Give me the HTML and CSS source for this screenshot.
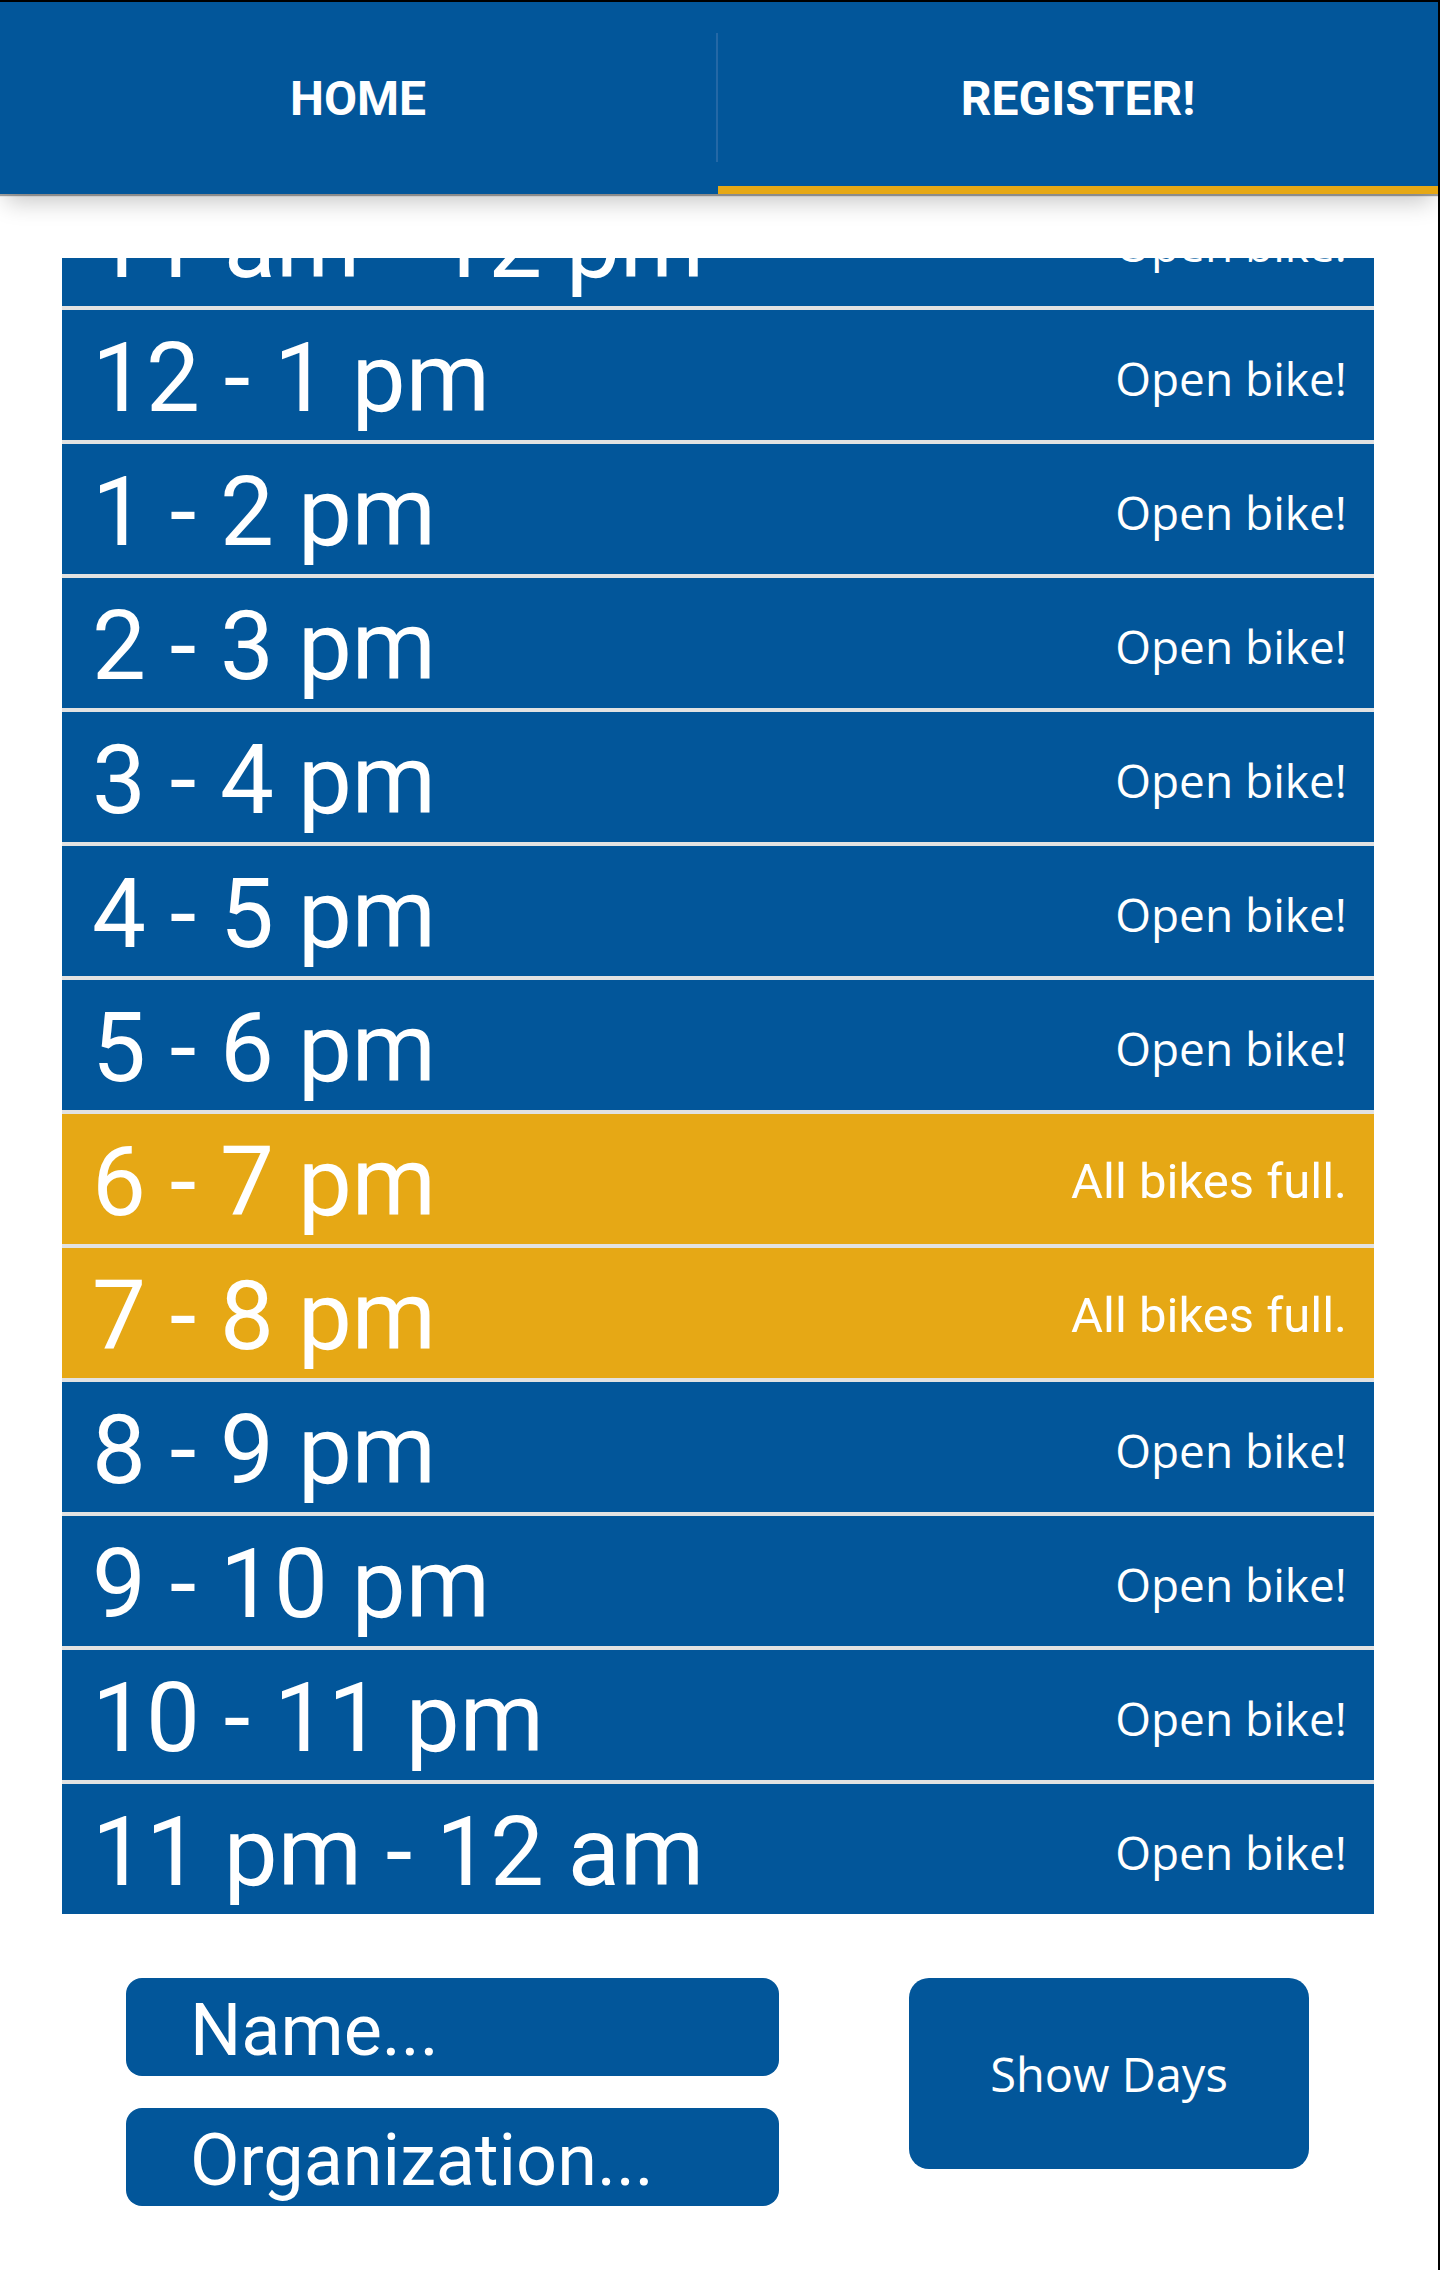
FILE: index.html
```html
<!DOCTYPE html>
<html lang="en">
<head>
<meta charset="utf-8">
<title>Register</title>
<link rel="stylesheet" href="styles.css">
</head>
<body>
<div class="frame">
  <header class="tabs">
    <div class="tab">HOME</div>
    <div class="tab-divider"></div>
    <div class="tab tab-active">REGISTER!</div>
  </header>

  <section class="schedule">
    <div class="rows">
      <div class="slot"><span class="time">11 am - 12 pm</span><span class="status status-open">Open bike!</span></div>
      <div class="slot"><span class="time">12 - 1 pm</span><span class="status status-open">Open bike!</span></div>
      <div class="slot"><span class="time">1 - 2 pm</span><span class="status status-open">Open bike!</span></div>
      <div class="slot"><span class="time">2 - 3 pm</span><span class="status status-open">Open bike!</span></div>
      <div class="slot"><span class="time">3 - 4 pm</span><span class="status status-open">Open bike!</span></div>
      <div class="slot"><span class="time">4 - 5 pm</span><span class="status status-open">Open bike!</span></div>
      <div class="slot"><span class="time">5 - 6 pm</span><span class="status status-open">Open bike!</span></div>
      <div class="slot slot-full"><span class="time">6 - 7 pm</span><span class="status status-full">All bikes full.</span></div>
      <div class="slot slot-full"><span class="time">7 - 8 pm</span><span class="status status-full">All bikes full.</span></div>
      <div class="slot"><span class="time">8 - 9 pm</span><span class="status status-open">Open bike!</span></div>
      <div class="slot"><span class="time">9 - 10 pm</span><span class="status status-open">Open bike!</span></div>
      <div class="slot"><span class="time">10 - 11 pm</span><span class="status status-open">Open bike!</span></div>
      <div class="slot"><span class="time">11 pm - 12 am</span><span class="status status-open">Open bike!</span></div>
    </div>
  </section>

  <section class="form">
    <div class="fields">
      <input class="field" type="text" placeholder="Name...">
      <input class="field" type="text" placeholder="Organization...">
    </div>
    <button class="show-days" type="button">Show Days</button>
  </section>
</div>
</body>
</html>
```

FILE: styles.css
```css
html, body {
  margin: 0;
  padding: 0;
  background: #ffffff;
}

.frame {
  box-sizing: border-box;
  width: 1440px;
  height: 2270px;
  border-top: 2px solid #000000;
  border-right: 2px solid #000000;
  overflow: hidden;
  font-family: Roboto, "Liberation Sans", sans-serif;
}

/* Header tabs */
.tabs {
  display: flex;
  height: 192px;
  background: #02569a;
  box-shadow: 0 2px 1px rgba(0, 0, 0, 0.35), 0 14px 22px -6px rgba(0, 0, 0, 0.22);
  position: relative;
  z-index: 1;
}

.tab {
  display: flex;
  align-items: center;
  justify-content: center;
  color: #ffffff;
  font-family: Roboto, "Liberation Sans", sans-serif;
  font-weight: 700;
  font-size: 48px;
}

.tab:first-child {
  width: 716px;
}

.tab-active {
  flex: 1;
  box-shadow: inset 0 -8px 0 #e6a815;
}

.tab-divider {
  width: 2px;
  height: 129px;
  margin-top: 31px;
  background: #2468a6;
}

/* Schedule list */
.schedule {
  width: 1312px;
  height: 1656px;
  margin: 64px 0 0 62px;
  overflow: hidden;
}

.rows {
  display: flex;
  flex-direction: column;
  gap: 4px;
  margin-top: -82px;
  background: #e2e2e2;
}

.slot {
  box-sizing: border-box;
  height: 130px;
  display: flex;
  align-items: center;
  justify-content: space-between;
  padding: 5px 27px 0 30px;
  background: #02569a;
  color: #ffffff;
}

.slot-full {
  background: #e6a815;
}

.time {
  font-family: Roboto, "Liberation Sans", sans-serif;
  font-size: 96px;
  line-height: 1;
  white-space: nowrap;
}

.status {
  white-space: nowrap;
  line-height: 1;
}

.status-open {
  font-family: "Open Sans", "Liberation Sans", sans-serif;
  font-size: 46px;
}

.status-full {
  font-family: Roboto, "Liberation Sans", sans-serif;
  font-size: 49px;
}

/* Bottom form */
.form {
  box-sizing: border-box;
  width: 1312px;
  margin: 64px 0 0 62px;
  padding: 0 65px 0 64px;
  display: flex;
  justify-content: space-between;
  align-items: flex-start;
}

.fields {
  display: flex;
  flex-direction: column;
  gap: 32px;
  width: 653px;
}

.field {
  box-sizing: border-box;
  width: 653px;
  height: 98px;
  margin: 0;
  padding: 6px 0 0 64px;
  border: none;
  border-radius: 16px;
  background: #02569a;
  color: #ffffff;
  font-family: Roboto, "Liberation Sans", sans-serif;
  font-size: 72px;
  outline: none;
}

.field::placeholder {
  color: #ffffff;
  opacity: 1;
}

.show-days {
  box-sizing: border-box;
  width: 400px;
  height: 191px;
  margin: 0;
  padding: 0;
  border: none;
  border-radius: 20px;
  background: #02569a;
  color: #ffffff;
  font-family: "Open Sans", "Liberation Sans", sans-serif;
  font-size: 47px;
}
```
